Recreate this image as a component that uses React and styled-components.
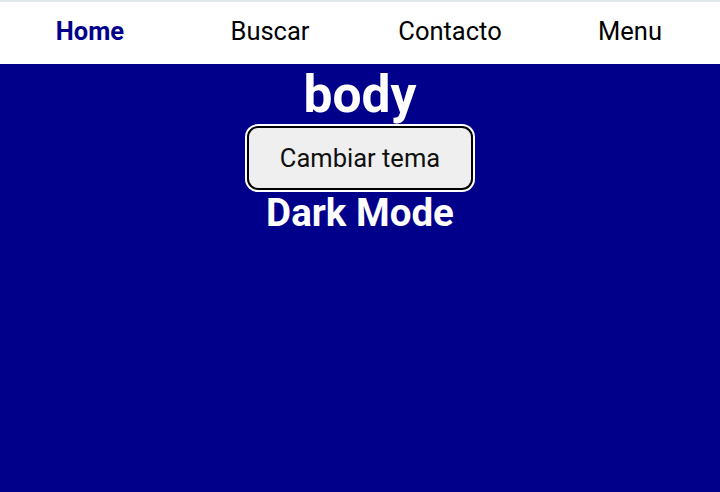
import styled, { createGlobalStyle } from "styled-components";

const GlobalStyle = createGlobalStyle`
  html, body {
    margin: 0;
    padding: 0;
    height: 100%;
    background: #00008b;
    font-family: Roboto, "Liberation Sans", sans-serif;
  }
  #root {
    min-height: 100%;
  }
`;

const NavBar = styled.nav`
  display: grid;
  grid-template-columns: repeat(4, 1fr);
  align-items: center;
  height: 62px;
  background: #ffffff;
  border-top: 2px solid #e1e6e9;
`;

const NavItem = styled.a`
  text-align: center;
  font-size: 25.5px;
  color: ${(p) => (p.$active ? "#00008b" : "#000000")};
  font-weight: ${(p) => (p.$active ? 700 : 400)};
  text-decoration: none;
  padding-bottom: 4px;
`;

const Main = styled.main`
  display: flex;
  flex-direction: column;
  align-items: center;
  color: #ffffff;
`;

const Title = styled.h1`
  margin: 0;
  font-size: 51.5px;
  font-weight: 700;
  line-height: 62px;
`;

const ThemeButton = styled.button`
  width: 226px;
  height: 64px;
  border: 2px solid #000;
  box-shadow: 0 0 0 2px #fff;
  border-radius: 11px;
  background: #efefef;
  font-family: inherit;
  font-size: 25.5px;
  font-weight: 400;
  color: #111;
  cursor: pointer;
`;

const ModeLabel = styled.h2`
  margin: 0;
  margin-top: 1px;
  font-size: 38.5px;
  font-weight: 700;
  line-height: 44px;
`;

export default function App() {
  return (
    <>
      <GlobalStyle />
      <NavBar>
        <NavItem $active>Home</NavItem>
        <NavItem>Buscar</NavItem>
        <NavItem>Contacto</NavItem>
        <NavItem>Menu</NavItem>
      </NavBar>
      <Main>
        <Title>body</Title>
        <ThemeButton>Cambiar tema</ThemeButton>
        <ModeLabel>Dark Mode</ModeLabel>
      </Main>
    </>
  );
}
